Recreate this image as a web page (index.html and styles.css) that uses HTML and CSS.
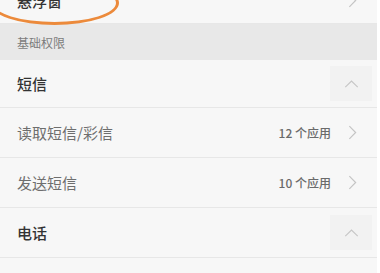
FILE: index.html
```html
<!DOCTYPE html>
<html lang="zh-CN">
<head>
<meta charset="utf-8">
<link rel="stylesheet" href="styles.css">
</head>
<body>
<div class="page">
  <div class="row row-top">
    <span class="label dark">悬浮窗</span>
    <svg class="chev-right" viewBox="0 0 10 16"><path d="M1.5 1 L8.5 8 L1.5 15" fill="none" stroke="#c4c4c4" stroke-width="1.3"/></svg>
    <div class="circle-mark"></div>
  </div>
  <div class="section">基础权限</div>
  <div class="row row-group">
    <span class="label dark">短信</span>
    <div class="up-box"><svg viewBox="0 0 16 9"><path d="M1 8 L8 1.2 L15 8" fill="none" stroke="#c6c6c6" stroke-width="1.3"/></svg></div>
  </div>
  <div class="row">
    <span class="label">读取短信/彩信</span>
    <span class="count">12 个应用</span>
    <svg class="chev-right" viewBox="0 0 10 16"><path d="M1.5 1 L8.5 8 L1.5 15" fill="none" stroke="#c4c4c4" stroke-width="1.3"/></svg>
  </div>
  <div class="row">
    <span class="label">发送短信</span>
    <span class="count">10 个应用</span>
    <svg class="chev-right" viewBox="0 0 10 16"><path d="M1.5 1 L8.5 8 L1.5 15" fill="none" stroke="#c4c4c4" stroke-width="1.3"/></svg>
  </div>
  <div class="row row-group row-phone">
    <span class="label dark">电话</span>
    <div class="up-box"><svg viewBox="0 0 16 9"><path d="M1 8 L8 1.2 L15 8" fill="none" stroke="#c6c6c6" stroke-width="1.3"/></svg></div>
  </div>
  <div class="row"></div>
</div>
</body>
</html>
```

FILE: styles.css
```css
html, body {
  margin: 0;
  padding: 0;
  background: #ffffff;
  overflow: hidden;
}
body {
  font-family: "Noto Sans CJK SC", "Noto Sans", sans-serif;
}
.page {
  width: 377px;
  background: #f7f7f7;
}
.row {
  position: relative;
  display: flex;
  align-items: center;
  height: 49px;
  padding: 0 20px 0 17px;
  border-bottom: 1px solid #e7e7e7;
  box-sizing: content-box;
}
.row-top {
  margin-top: -22px;
  height: 45px;
}
.row-group {
  height: 47px;
  padding-right: 5px;
}
.row-phone {
  height: 49px;
}
.label {
  flex: 1;
  font-size: 15px;
  color: #6e6e6e;
}
.label.dark {
  color: #333333;
  font-weight: 500;
}
.count {
  font-size: 12px;
  color: #6a6a6a;
  font-weight: 500;
  margin-right: 17px;
}
.chev-right {
  width: 9px;
  height: 15px;
}
.up-box {
  width: 42px;
  height: 35px;
  background: #f2f2f2;
  display: flex;
  align-items: center;
  justify-content: center;
}
.up-box svg {
  width: 15px;
  height: 8px;
}
.section {
  height: 36px;
  background: #e8e8e8;
  display: flex;
  align-items: center;
  padding-left: 17px;
  font-size: 12px;
  color: #7c7c7c;
}
.circle-mark {
  position: absolute;
  left: -10px;
  top: 3px;
  width: 129px;
  height: 44px;
  border: 3.5px solid #ec8a3b;
  border-radius: 50%;
  box-sizing: border-box;
}
```
